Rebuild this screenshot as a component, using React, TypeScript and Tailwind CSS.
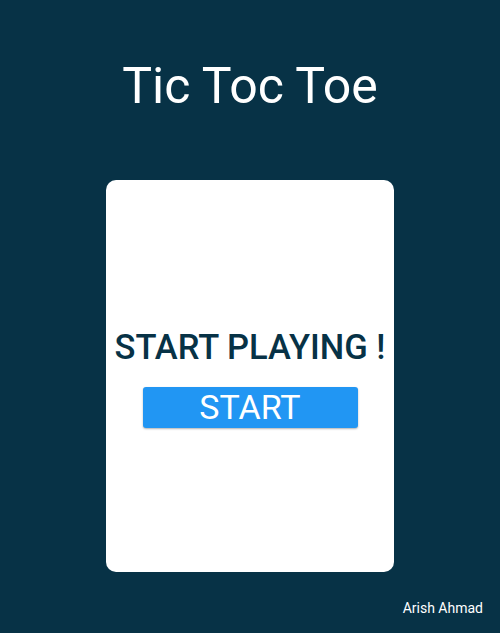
import React from "react";

export default function App() {
  return (
    <div
      className="w-full h-[633px] bg-[#073246] flex flex-col items-center"
      style={{ fontFamily: "Roboto, 'Noto Sans', sans-serif" }}
    >
      <h1 className="mt-[58px] h-[56px] text-[50px] leading-[56px] text-white font-normal">
        Tic Toc Toe
      </h1>
      <div className="mt-[66px] w-[288px] h-[392px] bg-white rounded-[10px] flex flex-col items-center justify-center">
        <h2 className="mt-[3px] text-[34.5px] leading-[38px] text-[#073246] font-medium">
          START PLAYING !
        </h2>
        <button className="mt-[21px] w-[215px] h-[41px] bg-[#2196F3] rounded-[3px] shadow-[0_1px_2px_rgba(0,0,0,0.3)] text-white text-[34px] leading-[41px]">
          START
        </button>
      </div>
      <div className="w-full flex justify-end pr-[17px] mt-[26px]">
        <span className="text-white text-[14px] leading-[20px]">Arish Ahmad</span>
      </div>
    </div>
  );
}
